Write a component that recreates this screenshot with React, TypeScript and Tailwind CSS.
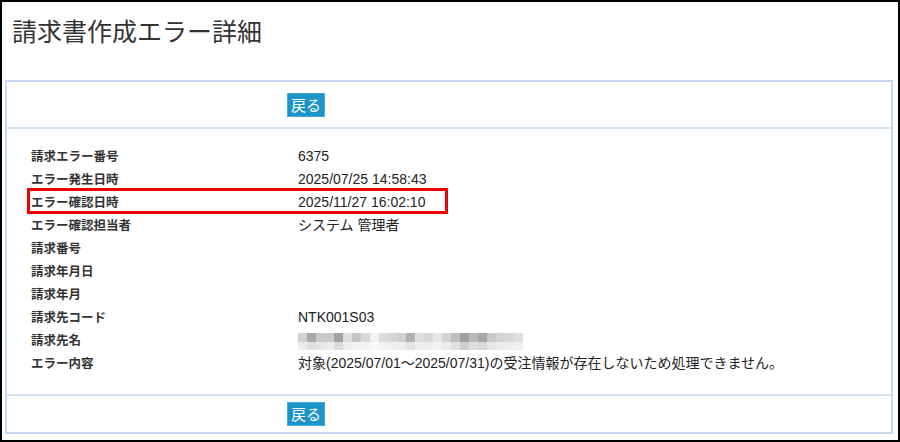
const rows: { label: string; value?: string; kind?: "blur" | "hl" }[] = [
  { label: "請求エラー番号", value: "6375" },
  { label: "エラー発生日時", value: "2025/07/25 14:58:43" },
  { label: "エラー確認日時", value: "2025/11/27 16:02:10", kind: "hl" },
  { label: "エラー確認担当者", value: "システム 管理者" },
  { label: "請求番号" },
  { label: "請求年月日" },
  { label: "請求年月" },
  { label: "請求先コード", value: "NTK001S03" },
  { label: "請求先名", kind: "blur" },
  { label: "エラー内容", value: "対象(2025/07/01～2025/07/31)の受注情報が存在しないため処理できません。" },
];

// pixelated (masked) customer name
const blurTop = [
  "bg-[#d2d2d2]", "bg-[#a9a9a9]", "bg-[#c9c9c9]", "bg-[#cacaca]", "bg-[#a2a2a2]",
  "bg-[#dedede]", "bg-[#c6c6c6]", "bg-[#d9d9d9]", "bg-[#f2f2f2]", "bg-[#dcdcdc]",
  "bg-[#d6d6d6]", "bg-[#cfcfcf]", "bg-[#b1b1b1]", "bg-[#dddddd]", "bg-[#d7d7d7]",
  "bg-[#e6e6e6]", "bg-[#d1d1d1]", "bg-[#c0c0c0]", "bg-[#a0a0a0]", "bg-[#bababa]",
  "bg-[#a8a8a8]", "bg-[#c8c8c8]", "bg-[#d3d3d3]", "bg-[#d8d8d8]", "bg-[#dfdfdf]",
];
const blurBottom = [
  "bg-[#ececec]", "bg-[#e0e0e0]", "bg-[#e6e6e6]", "bg-[#ebebeb]", "bg-[#dcdcdc]",
  "bg-[#eeeeee]", "bg-[#f2f2f2]", "bg-[#f4f4f4]", "bg-[#f8f8f8]", "bg-[#f2f2f2]",
  "bg-[#f0f0f0]", "bg-[#eeeeee]", "bg-[#e4e4e4]", "bg-[#f0f0f0]", "bg-[#efefef]",
  "bg-[#f3f3f3]", "bg-[#ececec]", "bg-[#e2e2e2]", "bg-[#cfcfcf]", "bg-[#dedede]",
  "bg-[#d9d9d9]", "bg-[#e6e6e6]", "bg-[#ececec]", "bg-[#efefef]", "bg-[#f1f1f1]",
];

function BackButton() {
  return (
    <button className="h-[24px] px-[3px] bg-[#1b95c7] border border-[#4aa9d6] text-white text-[15px] leading-[22px] font-['Noto_Sans_CJK_JP',sans-serif]">
      戻る
    </button>
  );
}

function Masked() {
  return (
    <div className="flex flex-col mt-[2px]">
      <div className="flex">
        {blurTop.map((c, i) => (
          <div key={i} className={`w-[9px] h-[9px] ${c}`} />
        ))}
      </div>
      <div className="flex">
        {blurBottom.map((c, i) => (
          <div key={i} className={`w-[9px] h-[8px] ${c}`} />
        ))}
      </div>
    </div>
  );
}

export default function App() {
  return (
    <div className="w-[900px] h-[442px] border-2 border-black bg-white overflow-hidden flex flex-col">
      <h1 className="h-[78px] pl-[10px] pt-[16px] text-[25px] leading-[25px] text-[#333] font-normal font-['Noto_Sans_CJK_JP',sans-serif]">
        請求書作成エラー詳細
      </h1>

      <div className="ml-[3px] mr-[5px] border-2 border-[#c6dbf1]">
        <div className="pt-[11px] pb-[10px] pl-[280px] border-b-2 border-[#d2e3f4] flex">
          <BackButton />
        </div>

        <div className="pt-[16px] pb-[19px] border-b-2 border-[#d2e3f4]">
          {rows.map((r) => (
            <div key={r.label} className="relative h-[23px] px-[24px] grid grid-cols-[267px_1fr] items-center">
              {r.kind === "hl" && (
                <div className="absolute left-[20px] top-[-3px] w-[421px] h-[26px] border-[3px] border-[#f00000]" />
              )}
              <span className="text-[12.5px] font-bold text-[#333] font-['Noto_Sans_CJK_JP',sans-serif]">
                {r.label}
              </span>
              {r.kind === "blur" ? (
                <Masked />
              ) : (
                <span className="text-[14px] text-[#222] whitespace-nowrap font-['Liberation_Sans','Noto_Sans_CJK_JP',sans-serif]">
                  {r.value}
                </span>
              )}
            </div>
          ))}
        </div>

        <div className="pt-[6px] pb-[6px] pl-[280px] flex">
          <BackButton />
        </div>
      </div>
    </div>
  );
}
